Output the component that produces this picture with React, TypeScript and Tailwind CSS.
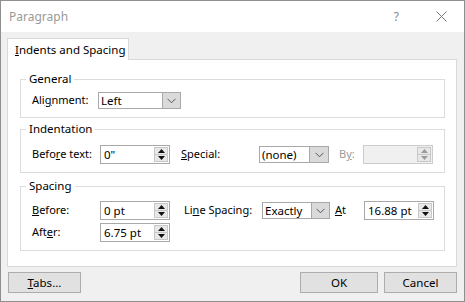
import React from "react";

const font = { fontFamily: '"Noto Sans", "Open Sans", sans-serif' };

function U({ children }: { children: React.ReactNode }) {
  return <span className="underline underline-offset-1 decoration-1">{children}</span>;
}

function Chevron({ color = "#555" }: { color?: string }) {
  return (
    <svg width="9" height="6" viewBox="0 0 9 6">
      <path d="M0.5 0.8 L4.5 4.8 L8.5 0.8" fill="none" stroke={color} strokeWidth="1" />
    </svg>
  );
}

function Select({ value, w, btnW = 18 }: { value: string; w: number; btnW?: number }) {
  return (
    <div
      className="flex h-[17px] items-stretch border border-[#a9a9a9] bg-white"
      style={{ width: w }}
    >
      <div className="flex flex-1 items-center whitespace-nowrap pl-[2px] text-[11.5px] leading-none">{value}</div>
      <div
        className="flex items-center justify-center border-l border-[#a9a9a9] bg-[#dadada]"
        style={{ width: btnW }}
      >
        <Chevron />
      </div>
    </div>
  );
}

function Tri({ up, color }: { up: boolean; color: string }) {
  return (
    <svg width="7" height="4" viewBox="0 0 7 4">
      {up ? <path d="M0 4 L3.5 0 L7 4 Z" fill={color} /> : <path d="M0 0 L3.5 4 L7 0 Z" fill={color} />}
    </svg>
  );
}

function Spin({ value, disabled = false }: { value: string; disabled?: boolean }) {
  const c = disabled ? "#9a9a9a" : "#111";
  return (
    <div
      className={
        "flex h-[19px] w-[70px] items-stretch border " +
        (disabled ? "border-[#cccccc] bg-[#f0f0f0]" : "border-[#a9a9a9] bg-white")
      }
    >
      <div className="flex flex-1 items-center whitespace-nowrap pl-[3px] text-[11.5px] leading-none">{value}</div>
      <div className="my-[1px] mr-[1px] flex w-[14px] flex-col border border-[#c8c8c8] bg-[#e8e8e8]">
        <div className="flex flex-1 items-center justify-center border-b border-[#c8c8c8]">
          <Tri up color={c} />
        </div>
        <div className="flex flex-1 items-center justify-center">
          <Tri up={false} color={c} />
        </div>
      </div>
    </div>
  );
}

function Group({
  label,
  h,
  pt,
  mt,
  children,
}: {
  label: string;
  h: number;
  pt: number;
  mt: number;
  children: React.ReactNode;
}) {
  return (
    <div
      className="relative w-[425px] border border-[#dcdcdc] pl-[11px]"
      style={{ height: h, paddingTop: pt, marginTop: mt }}
    >
      <div className="absolute left-[5px] top-[-9px] bg-white px-[3px] text-[11.5px] leading-[16px]">
        {label}
      </div>
      {children}
    </div>
  );
}

function Btn({ w, children }: { w: number; children: React.ReactNode }) {
  return (
    <div
      className="flex h-[21px] items-center justify-center border border-[#adadad] bg-[#e1e1e1] text-[11.5px]"
      style={{ width: w }}
    >
      {children}
    </div>
  );
}

export default function App() {
  return (
    <div
      className="flex h-[302px] w-[465px] flex-col border border-[#8f8f8f] bg-[#f0f0f0] text-[11px] text-black"
      style={font}
    >
      {/* title bar */}
      <div className="flex h-[31px] items-center bg-white">
        <div className="pl-[8px] pt-[1px] text-[12px] text-[#999999]">Paragraph</div>
        <div className="flex-1" />
        <div className="mr-[37px] pt-[1px] text-[12px] text-[#888888]">?</div>
        <div className="mr-[17px]">
          <svg width="11" height="11" viewBox="0 0 11 11">
            <path d="M0.5 0.5 L10.5 10.5 M10.5 0.5 L0.5 10.5" stroke="#777" strokeWidth="1" />
          </svg>
        </div>
      </div>

      {/* body */}
      <div className="flex flex-1 flex-col pl-[6px] pt-[6px]">
        <div className="relative z-10 -mb-px flex h-[22px] w-[122px] items-center whitespace-nowrap border border-b-0 border-[#d9d9d9] bg-white pl-[7px] text-[11.5px]">
          <span>
            <U>I</U>ndents and Spacing
          </span>
        </div>
        <div className="h-[208px] w-[450px] border border-[#d9d9d9] bg-white pl-[12px] pt-[19px]">
          <Group label="General" h={39} pt={12} mt={0}>
            <div className="flex items-center whitespace-nowrap">
              <div className="w-[66px]">
                Ali<U>g</U>nment:
              </div>
              <Select value="Left" w={83} />
            </div>
          </Group>

          <Group label="Indentation" h={44} pt={15} mt={11}>
            <div className="flex items-center whitespace-nowrap">
              <div className="w-[68px]">
                Befo<U>r</U>e text:
              </div>
              <Spin value={'0"'} />
              <div className="ml-[11px] w-[78px]">
                <U>S</U>pecial:
              </div>
              <Select value="(none)" w={70} btnW={19} />
              <div className="ml-[10px] w-[24px] text-[#9a9a9a]">
                B<U>y</U>:
              </div>
              <Spin value="" disabled />
            </div>
          </Group>

          <Group label="Spacing" h={65} pt={14} mt={13}>
            <div className="flex items-center whitespace-nowrap">
              <div className="w-[68px]">
                <U>B</U>efore:
              </div>
              <Spin value="0 pt" />
              <div className="ml-[14px] w-[78px]">
                Li<U>n</U>e Spacing:
              </div>
              <Select value="Exactly" w={68} btnW={18} />
              <div className="ml-[5px] w-[29px]">
                <U>A</U>t
              </div>
              <Spin value="16.88 pt" />
            </div>
            <div className="mt-[3px] flex items-center whitespace-nowrap">
              <div className="w-[68px]">
                Aft<U>e</U>r:
              </div>
              <Spin value="6.75 pt" />
            </div>
          </Group>
        </div>

        <div className="mt-[5px] flex pr-[7px]">
          <div className="ml-[1px]">
            <Btn w={73}>
              <span>
                <U>T</U>abs...
              </span>
            </Btn>
          </div>
          <div className="flex-1" />
          <Btn w={78}>OK</Btn>
          <div className="w-[6px]" />
          <Btn w={73}>Cancel</Btn>
        </div>
      </div>
    </div>
  );
}
